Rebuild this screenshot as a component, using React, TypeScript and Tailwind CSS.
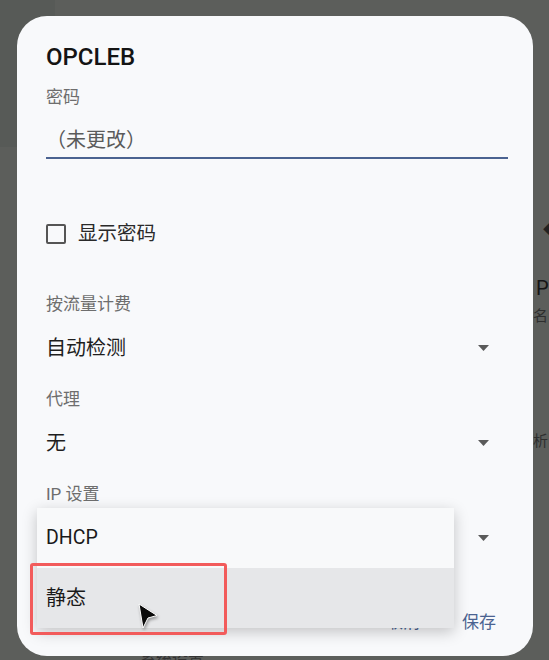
import React from 'react';

const cjk = "font-['Roboto','Noto_Sans_CJK_SC',sans-serif]";

function Arrow() {
  return (
    <svg width="11" height="6" viewBox="0 0 11 6" className="mr-[19px]">
      <path d="M0 0 L11 0 L5.5 6 Z" fill="#5a5a5a" />
    </svg>
  );
}

function Label({ text, mt }: { text: string; mt: string }) {
  return (
    <div className={`${mt} h-[20px] flex items-center text-[17px] text-[#6e6e6e]`}>{text}</div>
  );
}

function SelectRow({ value, mt }: { value: string; mt: string }) {
  return (
    <div className={`${mt} h-[28px] flex items-center justify-between text-[20px] text-[#1e1e1e]`}>
      <span>{value}</span>
      <Arrow />
    </div>
  );
}

export default function App() {
  return (
    <div className={`relative w-[549px] h-[660px] overflow-hidden bg-[#5c5e5b] pt-[16px] pl-[17px] ${cjk}`}>
      {/* dimmed page underneath */}
      <div className="absolute left-0 top-0 w-[55px] h-[147px] bg-[#575a57]" />
      <div className="absolute left-[543px] top-[219px] text-[14px] text-[#222]">◆</div>
      <div className="absolute left-[536px] top-[273px] text-[20px] text-[#151515]">P</div>
      <div className="absolute left-[533px] top-[305px] text-[15px] text-[#2e2e2e]">名</div>
      <div className="absolute left-[533px] top-[430px] text-[15px] text-[#2e2e2e]">析</div>
      <div className="absolute left-[140px] top-[648px] text-[16px] text-[#333]">系统设置</div>

      <div className="relative w-[516px] h-[640px] rounded-[30px] bg-[#f8f9fb] pt-[28px] pl-[29px] pr-[25px] flex flex-col">
        <div className="h-[26px] flex items-center text-[24px] font-medium text-[#141414]">OPCLEB</div>

        <Label text="密码" mt="mt-[18px]" />
        <div className="mt-[14px] h-[37px] flex items-center border-b-2 border-[#4b6391] text-[20px] text-[#5a5a5a]">
          （未更改）
        </div>

        <div className="mt-[61px] h-[28px] flex items-center gap-[12px]">
          <div className="w-[20px] h-[20px] rounded-[2px] border-2 border-[#555]" />
          <span className="text-[19.5px] text-[#2a2a2a]">显示密码</span>
        </div>

        <Label text="按流量计费" mt="mt-[47px]" />
        <SelectRow value="自动检测" mt="mt-[19px]" />

        <Label text="代理" mt="mt-[28px]" />
        <SelectRow value="无" mt="mt-[19px]" />

        <Label text="IP 设置" mt="mt-[28px]" />
        <SelectRow value="DHCP" mt="mt-[19px]" />

        <div className="mt-[59px] h-[24px] flex items-center justify-end gap-[42px] text-[17px] text-[#4b6391] pr-[12px]">
          <span>取消</span>
          <span>保存</span>
        </div>
      </div>

      {/* open dropdown menu */}
      <div className="absolute left-[37px] top-[508px] w-[417px] bg-[#f8f9fa] shadow-[0_4px_14px_rgba(0,0,0,0.22)] flex flex-col">
        <div className="h-[60px] flex items-center pl-[9px] text-[19.5px] text-[#1a1a1a]">DHCP</div>
        <div className="h-[60px] flex items-center pl-[9px] text-[20px] text-[#1a1a1a] bg-[#e6e7e9]">静态</div>
      </div>

      {/* highlight box */}
      <div className="absolute left-[30px] top-[563px] w-[197px] h-[72px] rounded-[3px] border-[3px] border-[#f25b5b]" />

      {/* mouse pointer */}
      <svg className="absolute left-[135px] top-[601px]" width="26" height="30" viewBox="0 0 26 30">
        <path
          d="M4 3 L22 14.5 L13 17 L8 27 Z"
          fill="#0a0a0a"
          stroke="#ffffff"
          strokeWidth="1"
          strokeLinejoin="round"
          style={{ filter: 'drop-shadow(1px 2px 1.5px rgba(0,0,0,0.35))' }}
        />
      </svg>
    </div>
  );
}
